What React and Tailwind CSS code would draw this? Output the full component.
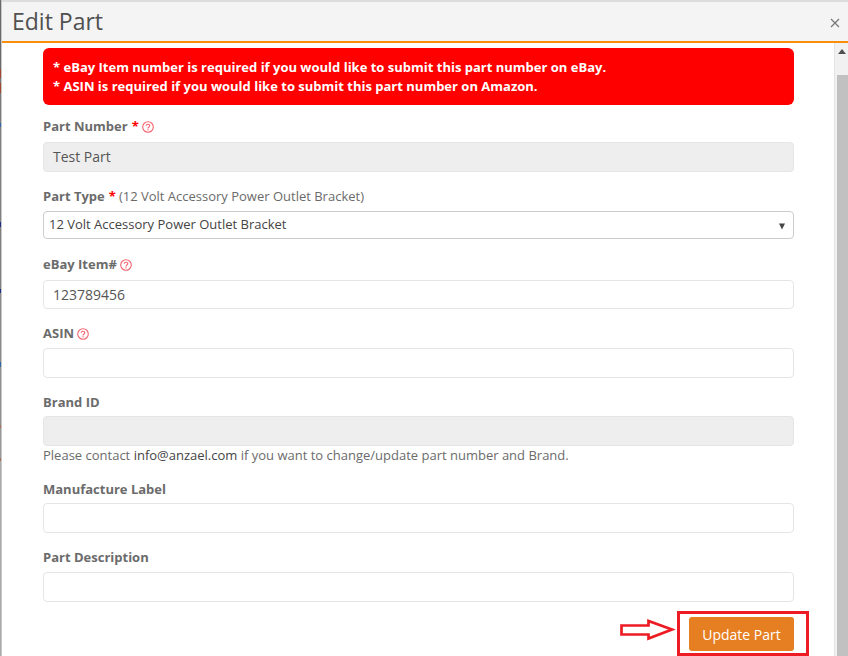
const Help = () => (
  <svg width="12" height="12" viewBox="0 0 12 12" fill="none" className="inline-block">
    <circle cx="6" cy="6" r="5.3" stroke="#f4646f" strokeWidth="1.1" />
    <path d="M4.2 4.8 C4.2 2.8 7.8 2.8 7.8 4.8 C7.8 6 6 6 6 7.4" stroke="#f4646f" strokeWidth="1.1" />
    <rect x="5.4" y="8.2" width="1.2" height="1.2" fill="#f4646f" />
  </svg>
);

const Label = ({ children, star, help, note, className = "" }) => (
  <div className={`flex items-center h-[20px] text-[13px] text-[#6b6b6b] ${className}`}>
    <span className="font-bold">{children}</span>
    {star && <span className="font-bold text-[#f00] ml-[4px]">*</span>}
    {note && <span className="ml-[3px]">{note}</span>}
    {help && <span className="ml-[3px] flex -mt-[1px]"><Help /></span>}
  </div>
);

const Input = ({ value = "", disabled, h = "h-[30px]" }) => (
  <div className={`${h} flex items-center pb-[1px] px-[9px] rounded-[4px] border border-[#e5e5e5] text-[14px] text-[#555] ${disabled ? "bg-[#eeeeee]" : "bg-white"}`}>
    {value}
  </div>
);

const edge = [
  [69, "#6a6a6a"], [9, "#a5442f"], [5, "#777777"], [10, "#a5442f"], [30, "#7a7a7a"], [4, "#2f66a8"],
  [95, "#808080"], [5, "#1f2f80"], [62, "#808080"], [4, "#1f2f80"], [69, "#8a8a8a"], [5, "#2f66a8"],
  [58, "#909090"], [3, "#a5705a"], [30, "#999999"], [3, "#a5705a"], [195, "#aaaaaa"],
];

export default function App() {
  return (
    <div className="w-[848px] h-[656px] overflow-hidden flex bg-white font-['Open_Sans',sans-serif]">
      <div className="w-[1px] h-full shrink-0 flex flex-col">
        {edge.map(([height, background], i) => (
          <div key={i} style={{ height, background }} />
        ))}
      </div>
      <div className="w-[1px] h-full bg-[#c8c8c8] shrink-0" />
      <div className="flex-1 flex flex-col min-w-0">
        <div className="h-[43px] shrink-0 flex items-center justify-between bg-[#f4f4f4] border-t-2 border-[#dddddd] border-b-2 border-b-[#f78e0c] pl-[10px] pr-[8px]">
          <span className="text-[23px] leading-none text-[#505050]">Edit Part</span>
          <svg width="10" height="10" viewBox="0 0 10 10" className="mt-[2px]"><path d="M1 1 L9 9 M9 1 L1 9" stroke="#777" strokeWidth="1.2" /></svg>
        </div>
        <div className="flex-1 flex min-h-0">
          <div className="flex-1 pl-[41px] pr-[40px] pt-[5px] min-w-0">
            <div className="h-[57px] rounded-[6px] bg-[#ff0000] text-white font-bold text-[13px] leading-[19px] px-[10px] flex flex-col justify-center">
              <div>* eBay Item number is required if you would like to submit this part number on eBay.</div>
              <div>* ASIN is required if you would like to submit this part number on Amazon.</div>
            </div>
            <Label star help className="mt-[12px]">Part Number</Label>
            <div className="mt-[5px]"><Input value="Test Part" disabled /></div>
            <Label star note="(12 Volt Accessory Power Outlet Bracket)" className="mt-[15px]">Part Type</Label>
            <div className="mt-[4px] h-[28px] flex items-center justify-between px-[5px] rounded-[4px] border border-[#cccccc] text-[13px] text-[#444]">
              <span>12 Volt Accessory Power Outlet Bracket</span>
              <svg width="8" height="7" viewBox="0 0 8 7" className="mr-[2px] mt-[2px]"><path d="M1 0.5 H7 L4 6.5 Z" fill="#444" /></svg>
            </div>
            <Label help className="mt-[16px]">eBay Item#</Label>
            <div className="mt-[5px]"><Input value="123789456" h="h-[29px]" /></div>
            <Label help className="mt-[15px]">ASIN</Label>
            <div className="mt-[4px]"><Input /></div>
            <Label className="mt-[15px]">Brand ID</Label>
            <div className="mt-[3px]"><Input disabled /></div>
            <div className="h-[19px] text-[13px] leading-[19px] text-[#6b6b6b]">
              Please contact <span className="text-[#444]">info@anzael.com</span> if you want to change/update part number and Brand.
            </div>
            <Label className="mt-[15px]">Manufacture Label</Label>
            <div className="mt-[3px]"><Input /></div>
            <Label className="mt-[15px]">Part Description</Label>
            <div className="mt-[4px]"><Input /></div>
            <div className="flex justify-end items-start mt-[15px]">
              <svg width="56" height="23" viewBox="0 0 56 23" className="mr-[13px] mt-[2px]" fill="none">
                <path d="M1.5 6.5 H28.5 V2 L52 10.5 L28.5 19.5 V15.5 H1.5 Z" stroke="#ed1c24" strokeWidth="2.7" />
              </svg>
              <div className="relative">
                <div className="h-[34px] w-[105px] flex items-center justify-center rounded-[3px] bg-[#e67e22] text-white text-[14px]">Update Part</div>
                <div className="absolute -left-[12px] -top-[6px] -right-[15px] h-[45px] border-[3px] border-[#ed1c24]" />
              </div>
            </div>
          </div>
          <div className="w-[14px] shrink-0 bg-[#f1f1f1] border-l border-[#e5e5e5] flex flex-col">
            <div className="h-[32px] flex items-start justify-center pt-[6px]">
              <svg width="8" height="5" viewBox="0 0 8 5"><path d="M4 0 L8 5 H0 Z" fill="#505050" /></svg>
            </div>
            <div className="flex-1 bg-[#c1c1c1] ml-[2px]" />
          </div>
        </div>
      </div>
    </div>
  );
}
